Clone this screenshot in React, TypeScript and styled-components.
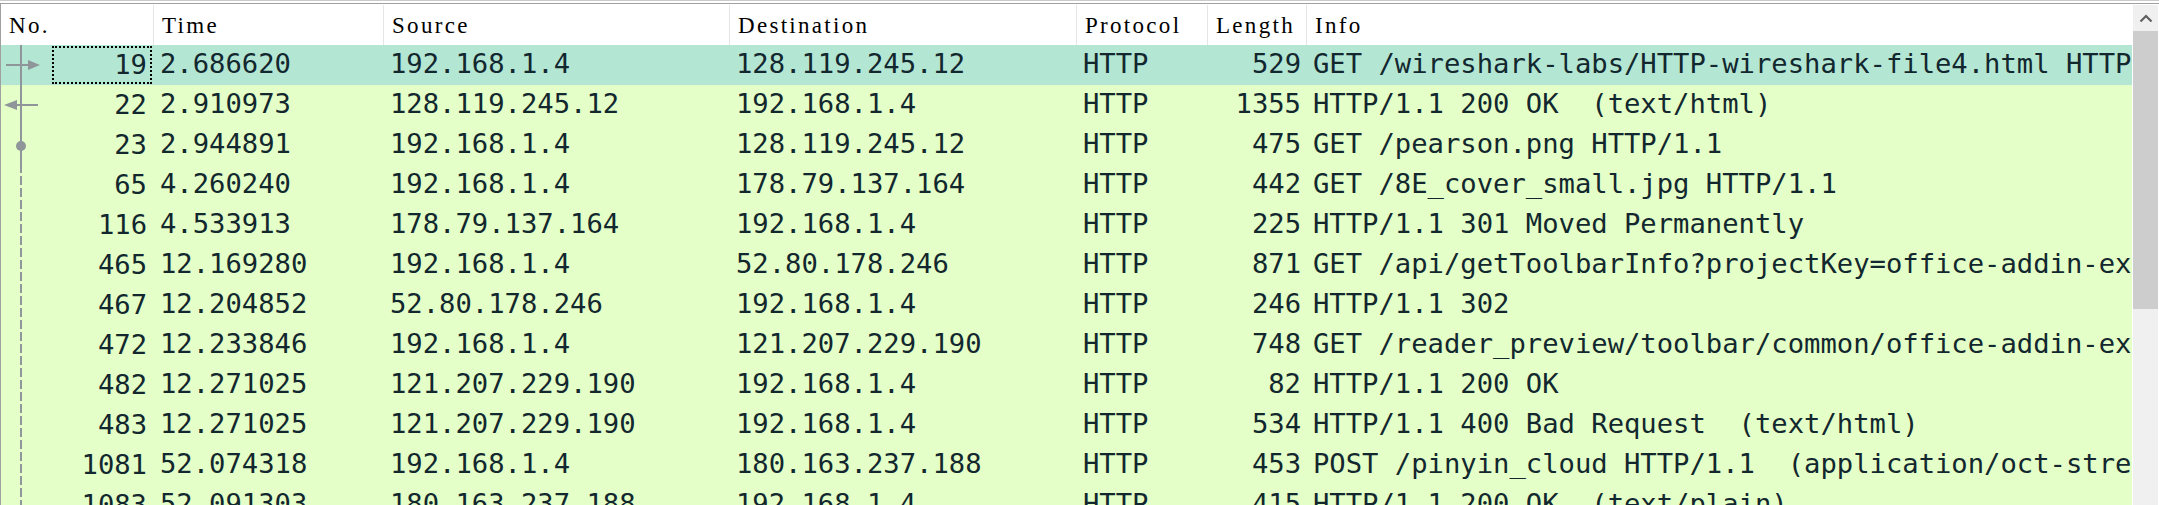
import React from "react";
import styled, { createGlobalStyle } from "styled-components";

const GlobalStyle = createGlobalStyle`
  html, body { margin: 0; padding: 0; background: #ffffff; }
  #root { width: 2159px; }
`;

const COLUMNS = "153px 230px 346px 347px 131px 99px 825px";

const Frame = styled.div`
  width: 2159px;
  height: 505px;
  box-sizing: border-box;
  overflow: hidden;
  background: #ffffff;
  border-top: 1px solid #cacaca;
  padding-top: 2px;
`;

const Panel = styled.div`
  display: flex;
  height: 100%;
  border-top: 1px solid #a0a0a0;
  border-left: 1px solid #a0a0a0;
`;

const Table = styled.div`
  flex: 0 0 2131px;
  display: flex;
  flex-direction: column;
  min-width: 0;
`;

const HeaderRow = styled.div`
  display: grid;
  grid-template-columns: ${COLUMNS};
  height: 41px;
  box-sizing: border-box;
  padding-top: 1px;
  background: #ffffff;
`;

const HeaderCell = styled.div<{ $last?: boolean }>`
  box-sizing: border-box;
  padding: 2px 0 0 8px;
  border-right: ${(p) => (p.$last ? "none" : "1px solid #e5e5e5")};
  font-family: "Liberation Serif", "Times New Roman", serif;
  font-size: 23px;
  letter-spacing: 2.3px;
  line-height: 38px;
  color: #000000;
  white-space: nowrap;
  overflow: hidden;
`;

const Body = styled.div`
  position: relative;
`;

const Row = styled.div<{ $selected?: boolean }>`
  display: grid;
  grid-template-columns: ${COLUMNS};
  height: 40px;
  background: ${(p) => (p.$selected ? "#b4e6d4" : "#e4ffc7")};
  color: #12272e;
  font-family: "DejaVu Sans Mono", "Liberation Mono", monospace;
  font-size: 27.2px;
`;

const Cell = styled.div<{ $align?: "left" | "right" }>`
  box-sizing: border-box;
  padding: 0 6px;
  text-align: ${(p) => p.$align ?? "left"};
  line-height: 37px;
  white-space: pre;
  overflow: hidden;
`;

const NoCell = styled.div`
  display: flex;
  justify-content: flex-end;
  align-items: center;
  box-sizing: border-box;
  padding: 1px 2px 1px 0;
`;

const NoText = styled.span<{ $focused?: boolean }>`
  box-sizing: border-box;
  width: 100px;
  height: 38px;
  padding-right: 3px;
  text-align: right;
  line-height: 33px;
  border: 2px dotted ${(p) => (p.$focused ? "#000000" : "transparent")};
`;

const RelationOverlay = styled.svg`
  position: absolute;
  left: 0;
  top: 0;
  pointer-events: none;
`;

const ScrollBar = styled.div`
  flex: 0 0 25px;
  margin: 1px 2px 0 1px;
  background: #f0f0f0;
  display: flex;
  flex-direction: column;
`;

const ScrollButton = styled.div`
  height: 26px;
  display: flex;
  align-items: center;
  justify-content: center;
`;

const Thumb = styled.div`
  height: 278px;
  background: #cdcdcd;
`;

type Packet = {
  no: number;
  time: string;
  src: string;
  dst: string;
  proto: string;
  len: number;
  info: string;
};

const packets: Packet[] = [
  { no: 19, time: "2.686620", src: "192.168.1.4", dst: "128.119.245.12", proto: "HTTP", len: 529, info: "GET /wireshark-labs/HTTP-wireshark-file4.html HTTP/1.1" },
  { no: 22, time: "2.910973", src: "128.119.245.12", dst: "192.168.1.4", proto: "HTTP", len: 1355, info: "HTTP/1.1 200 OK  (text/html)" },
  { no: 23, time: "2.944891", src: "192.168.1.4", dst: "128.119.245.12", proto: "HTTP", len: 475, info: "GET /pearson.png HTTP/1.1" },
  { no: 65, time: "4.260240", src: "192.168.1.4", dst: "178.79.137.164", proto: "HTTP", len: 442, info: "GET /8E_cover_small.jpg HTTP/1.1" },
  { no: 116, time: "4.533913", src: "178.79.137.164", dst: "192.168.1.4", proto: "HTTP", len: 225, info: "HTTP/1.1 301 Moved Permanently" },
  { no: 465, time: "12.169280", src: "192.168.1.4", dst: "52.80.178.246", proto: "HTTP", len: 871, info: "GET /api/getToolbarInfo?projectKey=office-addin-excel HTTP/1.1" },
  { no: 467, time: "12.204852", src: "52.80.178.246", dst: "192.168.1.4", proto: "HTTP", len: 246, info: "HTTP/1.1 302" },
  { no: 472, time: "12.233846", src: "192.168.1.4", dst: "121.207.229.190", proto: "HTTP", len: 748, info: "GET /reader_preview/toolbar/common/office-addin-excel HTTP/1.1" },
  { no: 482, time: "12.271025", src: "121.207.229.190", dst: "192.168.1.4", proto: "HTTP", len: 82, info: "HTTP/1.1 200 OK" },
  { no: 483, time: "12.271025", src: "121.207.229.190", dst: "192.168.1.4", proto: "HTTP", len: 534, info: "HTTP/1.1 400 Bad Request  (text/html)" },
  { no: 1081, time: "52.074318", src: "192.168.1.4", dst: "180.163.237.188", proto: "HTTP", len: 453, info: "POST /pinyin_cloud HTTP/1.1  (application/oct-stream)" },
  { no: 1083, time: "52.091303", src: "180.163.237.188", dst: "192.168.1.4", proto: "HTTP", len: 415, info: "HTTP/1.1 200 OK  (text/plain)" },
];

const headers = ["No.", "Time", "Source", "Destination", "Protocol", "Length", "Info"];

const LINE = "#8e9699";

function Relations() {
  return (
    <RelationOverlay width="45" height="470" viewBox="0 0 45 470">
      <line x1="20" y1="0" x2="20" y2="128" stroke={LINE} strokeWidth="2" />
      <line x1="20" y1="131" x2="20" y2="470" stroke={LINE} strokeWidth="2" strokeDasharray="9 3" />
      <line x1="5" y1="20" x2="28" y2="20" stroke={LINE} strokeWidth="2" />
      <polygon points="27,15 39,20 27,25" fill={LINE} />
      <line x1="15" y1="60" x2="37" y2="60" stroke={LINE} strokeWidth="2" />
      <polygon points="3,60 16,55 16,65" fill={LINE} />
      <circle cx="20" cy="101" r="5" fill={LINE} />
    </RelationOverlay>
  );
}

export default function App() {
  return (
    <>
      <GlobalStyle />
      <Frame>
        <Panel>
          <Table>
            <HeaderRow>
              {headers.map((h, i) => (
                <HeaderCell key={h} $last={i === headers.length - 1}>
                  {h}
                </HeaderCell>
              ))}
            </HeaderRow>
            <Body>
              {packets.map((p, i) => (
                <Row key={p.no} $selected={i === 0}>
                  <NoCell>
                    <NoText $focused={i === 0}>{p.no}</NoText>
                  </NoCell>
                  <Cell>{p.time}</Cell>
                  <Cell>{p.src}</Cell>
                  <Cell>{p.dst}</Cell>
                  <Cell>{p.proto}</Cell>
                  <Cell $align="right">{p.len}</Cell>
                  <Cell>{p.info}</Cell>
                </Row>
              ))}
              <Relations />
            </Body>
          </Table>
          <ScrollBar>
            <ScrollButton>
              <svg width="14" height="9" viewBox="0 0 14 9">
                <polyline points="1.5,7.5 7,2 12.5,7.5" fill="none" stroke="#606060" strokeWidth="2.2" />
              </svg>
            </ScrollButton>
            <Thumb />
          </ScrollBar>
        </Panel>
      </Frame>
    </>
  );
}
